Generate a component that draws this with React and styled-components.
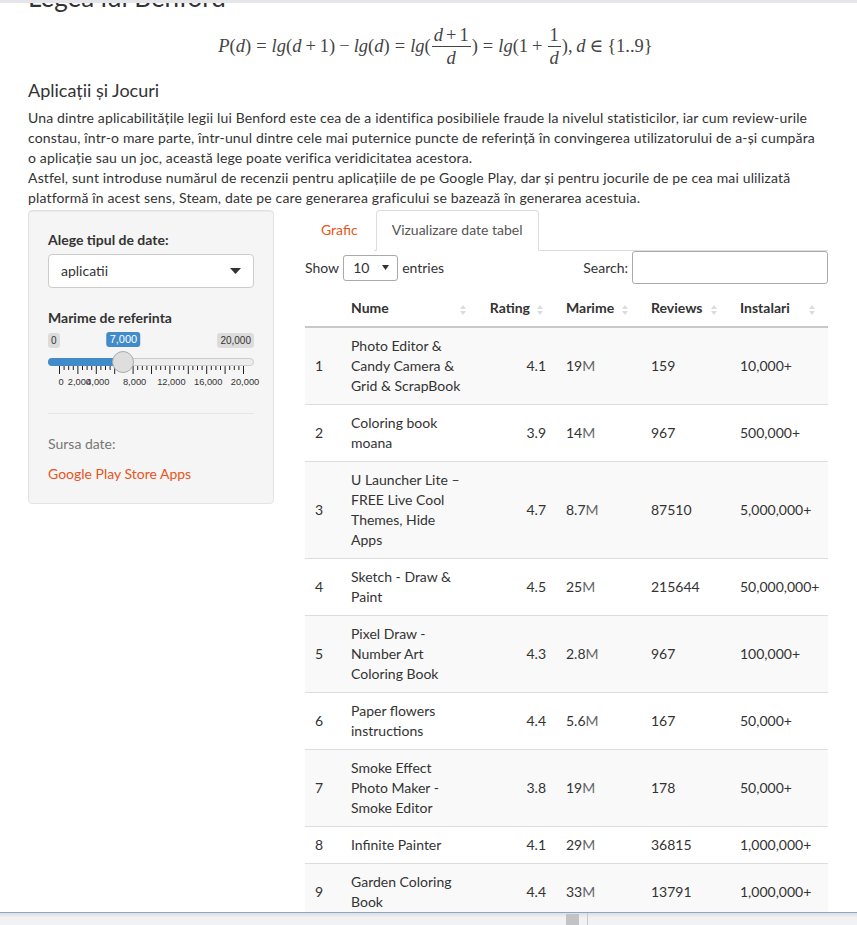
import React from "react";
import styled, { createGlobalStyle } from "styled-components";

const GlobalStyle = createGlobalStyle`
  html, body { margin: 0; padding: 0; overflow: hidden; background: #fff; }
  body {
    font-family: Lato, "Open Sans", "Noto Sans", sans-serif;
    font-size: 14px;
    line-height: 20px;
    color: #333;
  }
  * { box-sizing: border-box; }
`;

const TopStrip = styled.div`
  position: fixed; top: 0; left: 0; right: 0; height: 3px;
  background: #e5e6ea; z-index: 5;
`;

const BottomBar = styled.div`
  position: fixed; left: 0; right: 0; bottom: 0; height: 13px;
  border-top: 1px solid #8aa2d4;
  background: linear-gradient(#dedede, #f2f2f2 40%, #f2f2f2);
  z-index: 5;
`;
const BarThumb = styled.div`
  position: absolute; left: 566px; top: 1px; width: 13px; height: 11px;
  background: #c3c3c3;
`;
const BarSep = styled.div`
  position: absolute; left: 587px; top: 0; width: 1px; height: 12px;
  background: #c9c9c9;
`;

const Page = styled.div`
  padding: 0 14px 40px 28px;
`;

const Title = styled.h2`
  margin: -17px 0 0;
  font-size: 26px;
  line-height: 29px;
  font-weight: 400;
  color: #333;
`;

const Formula = styled.div`
  display: flex; justify-content: center; align-items: center;
  width: 815px;
  margin-top: 12px;
  height: 44px;
  font-family: "Liberation Serif", "DejaVu Serif", serif;
  font-size: 18.5px;
  color: #444;
  white-space: nowrap;
`;
const V = styled.i`font-style: italic;`;
const Op = styled.span`margin: 0 ${(p) => p.$sp ?? 4}px;`;
const Frac = styled.span`
  display: inline-flex; flex-direction: column; align-items: center;
  line-height: 20px; margin: 0 1px;
`;
const Num = styled.span`padding: 0 2px 1px;`;
const Den = styled.span`
  align-self: stretch; text-align: center;
  border-top: 1px solid #444; padding-top: 1px;
`;

const Heading = styled.h4`
  margin: 12px 0 8px;
  font-size: 18px;
  line-height: 20px;
  font-weight: 400;
  color: #333;
`;

const Para = styled.p`
  margin: 0 0 2px;
  white-space: nowrap;
  line-height: 20px;
  letter-spacing: 0.15px;
`;

const Row = styled.div`
  display: flex; align-items: flex-start; gap: 31px;
`;

const Sidebar = styled.div`
  width: 246px; padding: 19px;
  background: #f5f5f5; border: 1px solid #e3e3e3; border-radius: 4px;
  box-shadow: inset 0 1px 1px rgba(0,0,0,0.05);
`;
const Label = styled.div`
  font-weight: 700; margin-bottom: ${(p) => p.$mb ?? 4}px;
`;
const SelectBox = styled.div`
  height: 34px; border: 1px solid #ccc; border-radius: 4px; background: #fff;
  display: flex; align-items: center; justify-content: space-between;
  padding: 0 12px; color: #333;
`;
const Group = styled.div`margin-bottom: ${(p) => p.$mb}px;`;

const SliderBox = styled.div`
  position: relative; height: 65px; padding-top: 5px;
  font-family: "Liberation Sans", Arial, sans-serif;
`;
const MinMax = styled.div`display: flex; justify-content: space-between; height: 15px;`;
const Badge = styled.span`
  font-size: 10px; line-height: 13px; padding: 1px 3px; border-radius: 3px;
  background: ${(p) => (p.$value ? "#428bca" : "rgba(0,0,0,0.1)")};
  color: ${(p) => (p.$value ? "#fff" : "#333")};
  ${(p) => p.$value && "font-size: 11px; position: absolute; top: 4px; transform: translateX(-50%);"}
`;
const Track = styled.div`
  position: relative; height: 8px; margin-top: 10px;
  background: #ededed; border: 1px solid #ccc; border-radius: 8px;
`;
const Fill = styled.div`
  position: absolute; left: -1px; top: -1px; height: 8px;
  background: #428bca; border-radius: 8px 0 0 8px;
`;
const Handle = styled.div`
  position: absolute; top: -8px; width: 22px; height: 22px; margin-left: -11px;
  border-radius: 50%; background: #dedede; border: 1px solid #ababab;
`;
const Grid = styled.svg`display: block; overflow: visible;`;

const Hr = styled.hr`
  border: 0; border-top: 1px solid #e6e6e6; margin: 20px 0 20px;
`;
const Muted = styled.div`color: #777; margin-bottom: 10px;`;
const Link = styled.a`color: #e95420; text-decoration: none;`;

const Main = styled.div`width: 523px;`;

const Tabs = styled.ul`
  display: flex; list-style: none; margin: 0; padding: 0;
  border-bottom: 1px solid #ddd;
`;
const Tab = styled.li`
  margin-right: 2px; margin-bottom: -1px;
  padding: 9px 15px 10px; line-height: 20px;
  border: 1px solid ${(p) => (p.$active ? "#ddd" : "transparent")};
  border-bottom-color: transparent;
  border-radius: 4px 4px 0 0;
  background: #fff;
  color: ${(p) => (p.$active ? "#555" : "#e95420")};
`;

const Controls = styled.div`
  display: flex; justify-content: space-between; align-items: center;
  height: 33px;
`;
const Inline = styled.div`display: flex; align-items: center; gap: 4px;`;
const LenSelect = styled.div`
  width: 55px; height: 26px; border: 1px solid #aaa; border-radius: 3px;
  display: flex; align-items: center; justify-content: space-between;
  padding: 0 8px 0 9px; background: #fff;
`;
const SearchInput = styled.div`
  width: 196px; height: 33px; border: 1px solid #aaa; border-radius: 3px; background: #fff;
`;

const Table = styled.table`
  margin-top: 6px; width: 523px; border-collapse: collapse; table-layout: fixed;
`;
const Th = styled.th`
  position: relative; font-weight: 700; padding: 8px ${(p) => (p.$right ? 26 : 10)}px 8px 10px;
  text-align: ${(p) => (p.$right ? "right" : "left")};
  border-bottom: 2px solid #c8c8c8; line-height: 20px;
`;
const SortIcon = styled.svg`position: absolute; right: 13px; top: 14px;`;
const Tr = styled.tr`background: ${(p) => (p.$odd ? "#f9f9f9" : "#fff")};`;
const Td = styled.td`
  padding: 8px 10px; line-height: 20px; vertical-align: middle;
  border-top: 1px solid #ddd;
  text-align: ${(p) => (p.$right ? "right" : "left")};
`;
const Line = styled.span`display: block; white-space: nowrap;`;
const Unit = styled.span`color: #666;`;

const rows = [
  [1, ["Photo Editor &", "Candy Camera &", "Grid & ScrapBook"], "4.1", "19", "159", "10,000+"],
  [2, ["Coloring book", "moana"], "3.9", "14", "967", "500,000+"],
  [3, ["U Launcher Lite –", "FREE Live Cool", "Themes, Hide", "Apps"], "4.7", "8.7", "87510", "5,000,000+"],
  [4, ["Sketch - Draw &", "Paint"], "4.5", "25", "215644", "50,000,000+"],
  [5, ["Pixel Draw -", "Number Art", "Coloring Book"], "4.3", "2.8", "967", "100,000+"],
  [6, ["Paper flowers", "instructions"], "4.4", "5.6", "167", "50,000+"],
  [7, ["Smoke Effect", "Photo Maker -", "Smoke Editor"], "3.8", "19", "178", "50,000+"],
  [8, ["Infinite Painter"], "4.1", "29", "36815", "1,000,000+"],
  [9, ["Garden Coloring", "Book"], "4.4", "33", "13791", "1,000,000+"],
  [10, ["Kids Paint Free -", "Drawing Fun"], "4.7", "3.1", "121", "10,000+"],
];

const cols = [36, 138, 77, 85, 89, 98];
const headers = [["", false], ["Nume", false], ["Rating", true], ["Marime", false], ["Reviews", false], ["Instalari", false]];

const Sort = () => (
  <SortIcon width="6" height="12" viewBox="0 0 6 12">
    <path d="M0 5 L3 1 L6 5 Z" fill="#dcdcdc" />
    <path d="M0 7 L3 11 L6 7 Z" fill="#dcdcdc" />
  </SortIcon>
);

const W = 206, X0 = 11, X1 = 195;
const pos = (v) => X0 + (v / 20000) * (X1 - X0);

function Slider({ value }) {
  const hx = pos(value);
  const ticks = [];
  for (let i = 0; i <= 40; i++) {
    const major = i % 4 === 0;
    ticks.push(
      <line key={i} x1={X0 + (i * (X1 - X0)) / 40 + 0.5} x2={X0 + (i * (X1 - X0)) / 40 + 0.5}
        y1="0" y2={major ? 8 : 4} stroke="#222" strokeWidth="1" />
    );
  }
  const labels = [0, 2000, 4000, 8000, 12000, 16000, 20000];
  return (
    <SliderBox>
      <MinMax>
        <Badge>0</Badge>
        <Badge>20,000</Badge>
      </MinMax>
      <Badge $value style={{ left: hx }}>{value.toLocaleString("en-US")}</Badge>
      <Track>
        <Fill style={{ width: hx }} />
        <Handle style={{ left: hx - 1 }} />
      </Track>
      <Grid width={W} height="26" viewBox={`0 0 ${W} 26`}>
        {ticks}
        {labels.map((l) => (
          <text key={l} x={pos(l) + 2} y="19" fontSize="9.3" textAnchor="middle"
            fontFamily='"Liberation Sans", Arial, sans-serif' fill="#333">
            {l.toLocaleString("en-US")}
          </text>
        ))}
      </Grid>
    </SliderBox>
  );
}

export default function App() {
  return (
    <>
      <GlobalStyle />
      <TopStrip />
      <Page>
        <Title>Legea lui Benford</Title>
        <Formula>
          <V>P</V>(<V>d</V>)<Op $sp={5}>=</Op><V>lg</V>(<V>d</V><Op>+</Op>1)<Op>−</Op><V>lg</V>(<V>d</V>)
          <Op $sp={5}>=</Op><V>lg</V>(
          <Frac><Num><V>d</V><Op $sp={3}>+</Op>1</Num><Den><V>d</V></Den></Frac>
          )<Op $sp={5}>=</Op><V>lg</V>(1<Op>+</Op>
          <Frac><Num>1</Num><Den><V>d</V></Den></Frac>
          ),&thinsp;<V>d</V><Op>∈</Op>{"{"}1..9{"}"}
        </Formula>
        <Heading>Aplicații și Jocuri</Heading>
        <Para>
          Una dintre aplicabilitățile legii lui Benford este cea de a identifica posibiliele fraude la nivelul statisticilor, iar cum review-urile
          <br />
          constau, într-o mare parte, într-unul dintre cele mai puternice puncte de referință în convingerea utilizatorului de a-și cumpăra
          <br />
          o aplicație sau un joc, această lege poate verifica veridicitatea acestora.
          <br />
          Astfel, sunt introduse numărul de recenzii pentru aplicațiile de pe Google Play, dar și pentru jocurile de pe cea mai ulilizată
          <br />
          platformă în acest sens, Steam, date pe care generarea graficului se bazează în generarea acestuia.
        </Para>
        <Row>
          <Sidebar>
            <Group $mb={20}>
              <Label>Alege tipul de date:</Label>
              <SelectBox>
                <span>aplicatii</span>
                <svg width="11" height="6" viewBox="0 0 11 6"><path d="M0 0 L11 0 L5.5 6 Z" fill="#333" /></svg>
              </SelectBox>
            </Group>
            <Label $mb={0}>Marime de referinta</Label>
            <Slider value={7000} />
            <Hr />
            <Muted>Sursa date:</Muted>
            <Link href="#">Google Play Store Apps</Link>
          </Sidebar>
          <Main>
            <Tabs>
              <Tab>Grafic</Tab>
              <Tab $active>Vizualizare date tabel</Tab>
            </Tabs>
            <Controls>
              <Inline>
                <span>Show</span>
                <LenSelect>
                  <span>10</span>
                  <svg width="7" height="5" viewBox="0 0 7 5"><path d="M0 0 L7 0 L3.5 5 Z" fill="#333" /></svg>
                </LenSelect>
                <span>entries</span>
              </Inline>
              <Inline>
                <span>Search:</span>
                <SearchInput />
              </Inline>
            </Controls>
            <Table>
              <colgroup>
                {cols.map((w, i) => <col key={i} style={{ width: w }} />)}
              </colgroup>
              <thead>
                <tr>
                  {headers.map(([h, r], i) => (
                    <Th key={i} $right={r}>{h}{i > 0 && <Sort />}</Th>
                  ))}
                </tr>
              </thead>
              <tbody>
                {rows.map(([n, name, rating, size, rev, inst]) => (
                  <Tr key={n} $odd={n % 2 === 1}>
                    <Td>{n}</Td>
                    <Td>{name.map((l, i) => <Line key={i}>{l}</Line>)}</Td>
                    <Td $right>{rating}</Td>
                    <Td>{size}<Unit>M</Unit></Td>
                    <Td>{rev}</Td>
                    <Td>{inst}</Td>
                  </Tr>
                ))}
              </tbody>
            </Table>
          </Main>
        </Row>
      </Page>
      <BottomBar>
        <BarThumb />
        <BarSep />
      </BottomBar>
    </>
  );
}
